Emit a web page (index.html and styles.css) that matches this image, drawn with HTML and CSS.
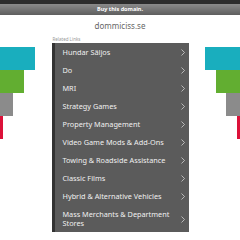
FILE: index.html
```html
<!DOCTYPE html>
<html>
<head>
<meta charset="utf-8">
<link rel="stylesheet" href="styles.css">
</head>
<body>
<div class="topstrip"></div>
<div class="buybar">Buy this domain.</div>
<div class="domain">dommiciss.se</div>
<div class="main">
  <div class="deco deco-left">
    <div class="bar teal w35"></div>
    <div class="bar green w24"></div>
    <div class="bar gray w13"></div>
    <div class="bar red w3"></div>
  </div>
  <div class="center">
    <div class="related">Related Links</div>
    <ul class="links">
      <li class="c1"><span>Hundar Säljos</span><svg class="chev" viewBox="0 0 4 7"><polyline points="0.5,0.5 3.5,3.5 0.5,6.5"/></svg></li>
      <li class="c2"><span>Do</span><svg class="chev" viewBox="0 0 4 7"><polyline points="0.5,0.5 3.5,3.5 0.5,6.5"/></svg></li>
      <li class="c3"><span>MRI</span><svg class="chev" viewBox="0 0 4 7"><polyline points="0.5,0.5 3.5,3.5 0.5,6.5"/></svg></li>
      <li class="c4"><span>Strategy Games</span><svg class="chev" viewBox="0 0 4 7"><polyline points="0.5,0.5 3.5,3.5 0.5,6.5"/></svg></li>
      <li class="c5"><span>Property Management</span><svg class="chev" viewBox="0 0 4 7"><polyline points="0.5,0.5 3.5,3.5 0.5,6.5"/></svg></li>
      <li class="c6"><span>Video Game Mods &amp; Add-Ons</span><svg class="chev" viewBox="0 0 4 7"><polyline points="0.5,0.5 3.5,3.5 0.5,6.5"/></svg></li>
      <li class="c7"><span>Towing &amp; Roadside Assistance</span><svg class="chev" viewBox="0 0 4 7"><polyline points="0.5,0.5 3.5,3.5 0.5,6.5"/></svg></li>
      <li class="c8"><span>Classic Films</span><svg class="chev" viewBox="0 0 4 7"><polyline points="0.5,0.5 3.5,3.5 0.5,6.5"/></svg></li>
      <li class="c9"><span>Hybrid &amp; Alternative Vehicles</span><svg class="chev" viewBox="0 0 4 7"><polyline points="0.5,0.5 3.5,3.5 0.5,6.5"/></svg></li>
      <li class="c10"><span>Mass Merchants &amp; Department Stores</span><svg class="chev" viewBox="0 0 4 7"><polyline points="0.5,0.5 3.5,3.5 0.5,6.5"/></svg></li>
    </ul>
  </div>
  <div class="deco deco-right">
    <div class="bar teal w35"></div>
    <div class="bar green w24"></div>
    <div class="bar gray w14"></div>
    <div class="bar red w3"></div>
  </div>
</div>
</body>
</html>
```
FILE: styles.css
```css
html, body {
  margin: 0;
  padding: 0;
  background: #fff;
  font-family: "Noto Sans", "DejaVu Sans", sans-serif;
}
.topstrip {
  height: 4px;
  background: #2c2c2c;
}
.buybar {
  height: 11px;
  line-height: 11px;
  background: linear-gradient(#8a8a8a, #5e5e5e);
  color: #fff;
  font-size: 5.5px;
  font-weight: bold;
  text-align: center;
}
.domain {
  margin-top: 6px;
  text-align: center;
  font-size: 8px;
  line-height: 10px;
  color: #666;
}
.main {
  display: grid;
  grid-template-columns: 1fr 137px 1fr;
  margin-top: 5px;
}
.deco {
  display: flex;
  flex-direction: column;
  margin-top: 11px;
}
.deco-left { align-items: flex-start; }
.deco-right { align-items: flex-end; }
.bar { height: 23px; }
.teal { background: #19aebe; }
.green { background: #62ae31; }
.gray { background: #8b8b8b; }
.red { background: #dc1139; }
.w35 { width: 35px; }
.w24 { width: 24px; }
.w13 { width: 13px; }
.w14 { width: 14px; }
.w3 { width: 3px; }
.related {
  font-size: 4.5px;
  line-height: 6px;
  color: #999;
  padding-left: 1px;
}
.links {
  list-style: none;
  margin: 1px 0 0 0;
  padding: 0;
  background: #5b5b5b;
}
.links li {
  display: flex;
  align-items: center;
  padding: 5px 4px 4px 8px;
  border-left: 3px solid #333;
  color: #f0f0f0;
  font-size: 7.3px;
  line-height: 9px;
}
.links li span {
  flex: 1;
  min-width: 0;
  margin-right: 2px;
}
.chev {
  width: 4px;
  height: 7px;
  flex: none;
  fill: none;
  stroke: #d0d0d0;
  stroke-width: 0.8;
}
.c1 { border-left-color: #2f7277; }
.c2 { border-left-color: #b9d648; }
.c3 { border-left-color: #f1d20c; }
.c4 { border-left-color: #e3761f; }
.c5 { border-left-color: #1e5465; }
.c6 { border-left-color: #2c8a6e; }
.c7 { border-left-color: #c3d73c; }
.c8 { border-left-color: #f1da2a; }
.c9 { border-left-color: #e2741c; }
.c10 { border-left-color: #1d4c5d; }
```
